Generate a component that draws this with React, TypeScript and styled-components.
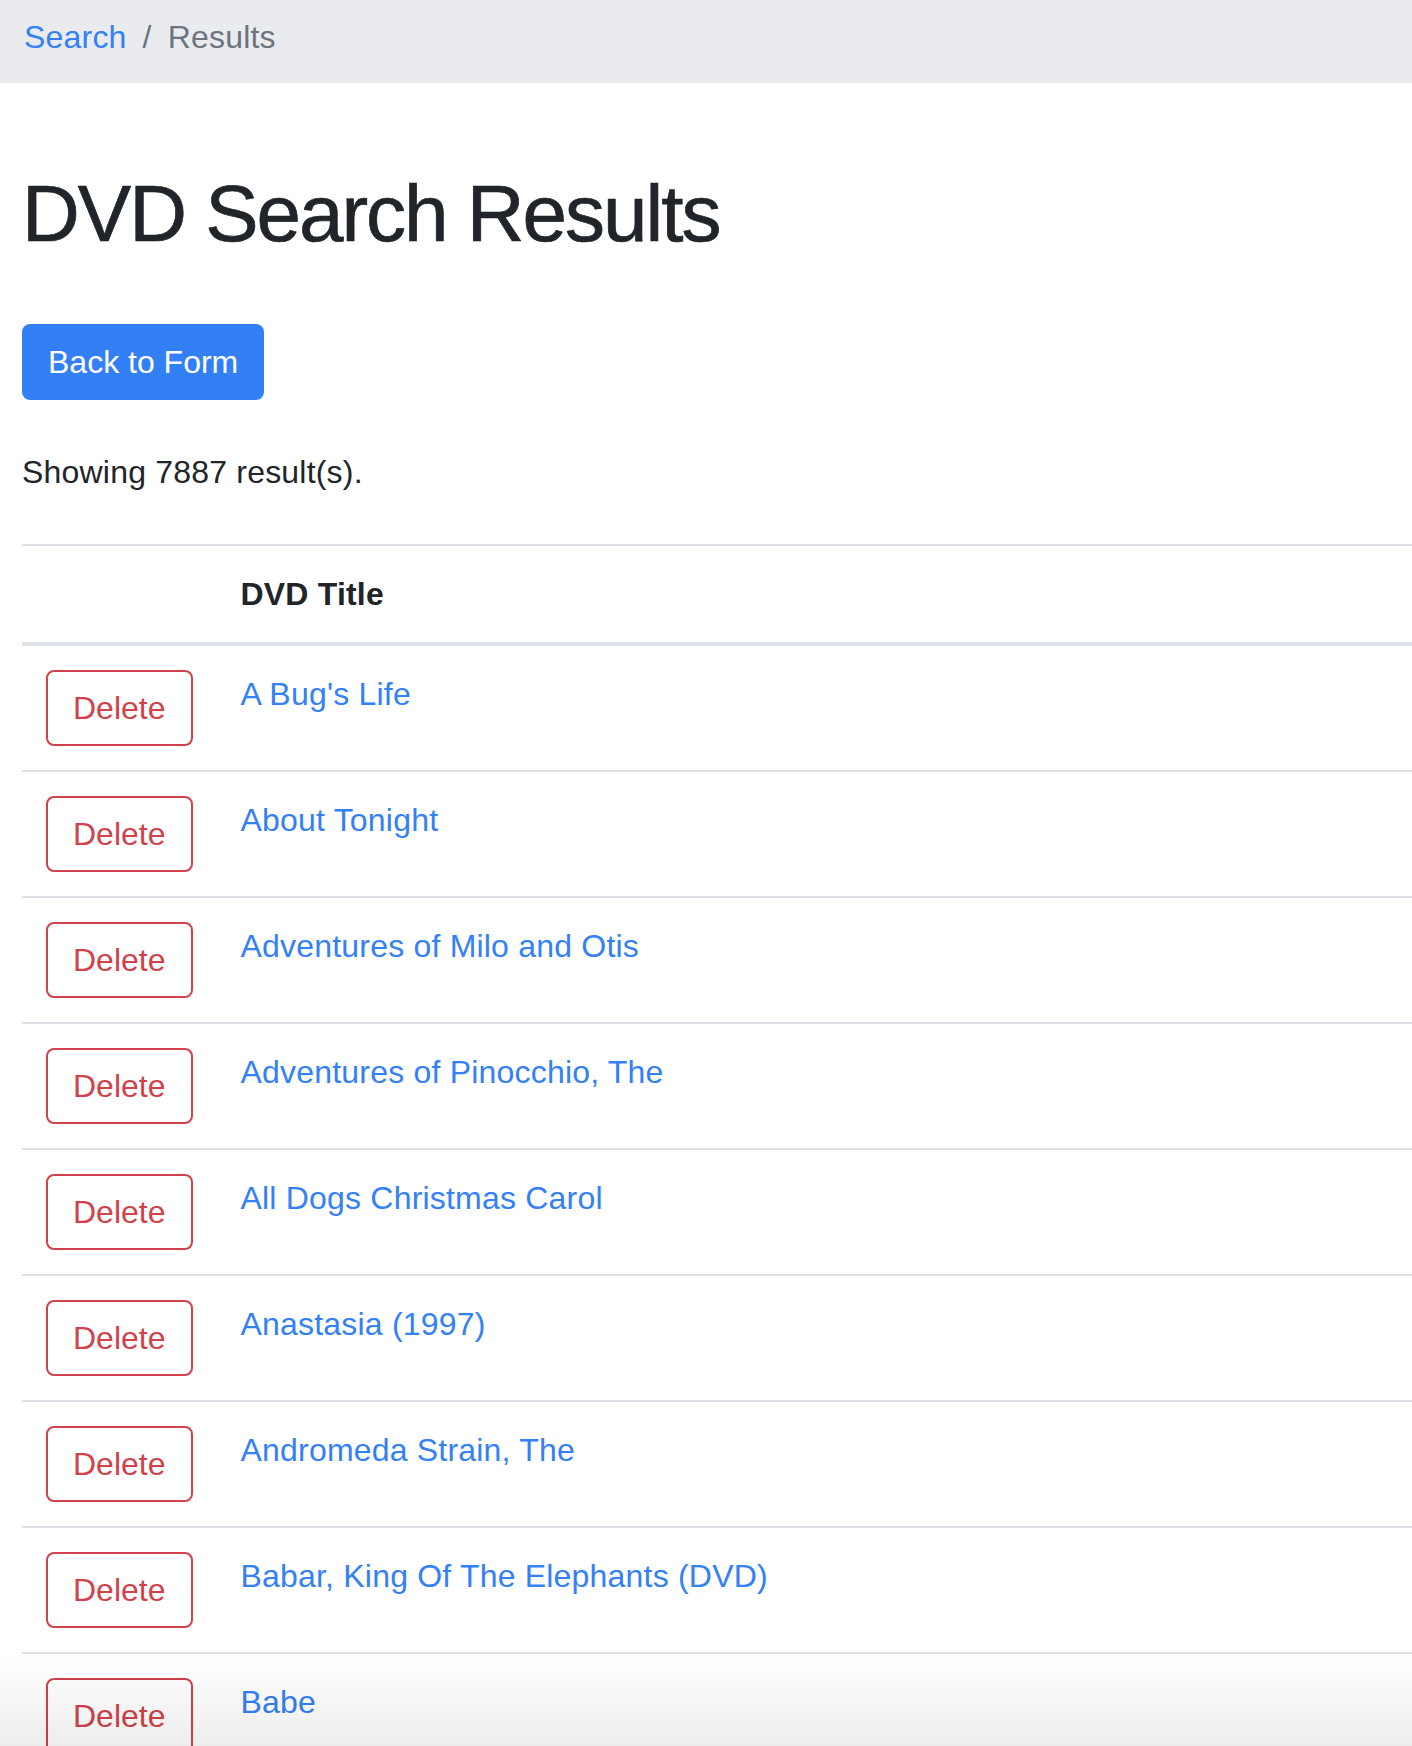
import { FC } from "react";
import styled, { createGlobalStyle } from "styled-components";

const dvds = [
  "A Bug's Life",
  "About Tonight",
  "Adventures of Milo and Otis",
  "Adventures of Pinocchio, The",
  "All Dogs Christmas Carol",
  "Anastasia (1997)",
  "Andromeda Strain, The",
  "Babar, King Of The Elephants (DVD)",
  "Babe",
];

const GlobalStyle = createGlobalStyle`
  html, body {
    margin: 0;
    padding: 0;
    background: #fff;
  }

  body {
    font-family: "Liberation Sans", Arial, sans-serif;
    font-size: 32px;
    line-height: 48px;
    color: #212529;
    letter-spacing: 0.2px;
  }

  * {
    box-sizing: border-box;
  }
`;

const Breadcrumb = styled.nav`
  display: flex;
  align-items: center;
  background-color: #e9ebef;
  padding: 13px 24px 22px;
`;

const Crumb = styled.a`
  color: #3480f6;
  text-decoration: none;
`;

const Divider = styled.span`
  color: #6c757d;
  padding: 0 16px;
`;

const Active = styled.span`
  color: #6c757d;
`;

const Container = styled.main`
  padding: 83px 0 0 22px;
`;

const Heading = styled.h1`
  margin: 0 0 62px;
  font-size: 80px;
  line-height: 96px;
  font-weight: 500;
  letter-spacing: -2px;
  -webkit-text-stroke: 0.7px #212529;
`;

const PrimaryButton = styled.button`
  display: inline-block;
  font-family: inherit;
  font-size: 32px;
  line-height: 48px;
  color: #fff;
  background-color: #3380f6;
  border: 2px solid #3380f6;
  border-radius: 8px;
  padding: 12px 24px;
  cursor: pointer;
`;

const Summary = styled.p`
  margin: 48px 0 48px;
`;

const Table = styled.table`
  width: 100%;
  border-collapse: separate;
  border-spacing: 0;
`;

const HeadCell = styled.th`
  text-align: left;
  font-weight: 700;
  padding: 24px;
  border-top: 2px solid #dee2e6;
  border-bottom: 4px solid #dee2e6;
  vertical-align: bottom;
`;

const Cell = styled.td<{ narrow?: boolean }>`
  padding: 24px;
  border-bottom: 2px solid #dee2e6;
  vertical-align: top;
  width: ${({ narrow }) => (narrow ? "1%" : "auto")};
  white-space: ${({ narrow }) => (narrow ? "nowrap" : "normal")};
`;

const DeleteButton = styled.button`
  display: block;
  font-family: inherit;
  font-size: 32px;
  line-height: 48px;
  color: #d0434b;
  background: transparent;
  border: 2px solid #d0434b;
  border-radius: 8px;
  padding: 12px 25px;
  cursor: pointer;
`;

const TitleLink = styled.a`
  color: #3480f6;
  text-decoration: none;
`;

const BottomFade = styled.div`
  position: fixed;
  left: 0;
  right: 0;
  bottom: 0;
  height: 90px;
  pointer-events: none;
  background: linear-gradient(to bottom, rgba(0, 0, 0, 0), rgba(0, 0, 0, 0.07));
`;

const App: FC = () => {
  return (
    <>
      <GlobalStyle />
      <Breadcrumb>
        <Crumb href="#">Search</Crumb>
        <Divider>/</Divider>
        <Active>Results</Active>
      </Breadcrumb>

      <Container>
        <Heading>DVD Search Results</Heading>
        <PrimaryButton>Back to Form</PrimaryButton>
        <Summary>Showing 7887 result(s).</Summary>

        <Table>
          <thead>
            <tr>
              <HeadCell />
              <HeadCell>DVD Title</HeadCell>
            </tr>
          </thead>
          <tbody>
            {dvds.map((title) => (
              <tr key={title}>
                <Cell narrow>
                  <DeleteButton>Delete</DeleteButton>
                </Cell>
                <Cell>
                  <TitleLink href="#">{title}</TitleLink>
                </Cell>
              </tr>
            ))}
          </tbody>
        </Table>
      </Container>
      <BottomFade />
    </>
  );
};

export default App;
